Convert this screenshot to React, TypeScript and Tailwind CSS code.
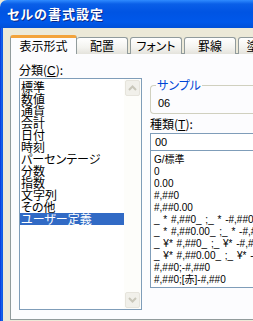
const font = { fontFamily: '"Noto Sans CJK JP", "Noto Sans", sans-serif' };
const latin = { fontFamily: '"Liberation Sans", "Noto Sans CJK JP", sans-serif' };

const categories = [
  "標準",
  "数値",
  "通貨",
  "会計",
  "日付",
  "時刻",
  "パーセンテージ",
  "分数",
  "指数",
  "文字列",
  "その他",
  "ユーザー定義",
];

const formats = [
  "G/標準",
  "0",
  "0.00",
  "#,##0",
  "#,##0.00",
  "_ * #,##0_ ;_ * -#,##0_ ;_ * \"-\"_ ;_ @_ ",
  "_ * #,##0.00_ ;_ * -#,##0.00_ ;_ * \"-\"??_ ;_ @_ ",
  "_ ¥* #,##0_ ;_ ¥* -#,##0_ ;_ ¥* \"-\"_ ;_ @_ ",
  "_ ¥* #,##0.00_ ;_ ¥* -#,##0.00_ ;_ ¥* \"-\"??_ ;_ @_ ",
  "#,##0;-#,##0",
  "#,##0;[赤]-#,##0",
];

const tabs = [
  { label: "配置", w: "w-[51px] border-l-0" },
  { label: "フォント", w: "w-[52px]" },
  { label: "罫線", w: "w-[52px]" },
  { label: "塗りつぶし", w: "w-[72px]" },
];

function ScrollButton({ down }: { down?: boolean }) {
  return (
    <div className="w-[15px] h-[16px] rounded-[2px] bg-[#f1f0ea] border border-[#e6e4dc] flex items-center justify-center">
      <svg width="9" height="6" viewBox="0 0 9 6">
        <path
          d={down ? "M1 1 L4.5 4.5 L8 1" : "M1 5 L4.5 1.5 L8 5"}
          fill="none"
          stroke="#c9c7ba"
          strokeWidth="2"
        />
      </svg>
    </div>
  );
}

export default function App() {
  return (
    <div
      className="w-[253px] h-[321px] overflow-hidden flex flex-col bg-[#ece9d8] text-[12px] text-black [font-feature-settings:'palt']"
      style={font}
    >
      {/* title bar */}
      <div className="h-[28px] shrink-0 rounded-tl-[7px] bg-[linear-gradient(#2f8bff_0px,#0a5fe8_4px,#0054e3_12px,#0058ea_22px,#0050d8_28px)] flex items-center pl-[7px]">
        <span className="text-white font-bold text-[13px] tracking-[1px] [text-shadow:1px_1px_0_#0a2a8a]">
          セルの書式設定
        </span>
      </div>

      <div className="flex flex-1 min-h-0">
        <div className="w-[3px] shrink-0 bg-[linear-gradient(90deg,#0831d9,#166aee_60%,#0d4fdf)]" />

        <div className="flex-1 min-w-0 overflow-hidden pl-[7px] pt-[7px] flex flex-col">
          {/* tabs */}
          <div className="flex items-end h-[19px] relative z-10 -mb-px">
            <div className="w-[67px] h-[19px] shrink-0 bg-[#fcfcfe] border border-[#919b9c] border-b-0 border-t-[3px] border-t-[#f3a33b] rounded-t-[3px] flex items-center justify-center whitespace-nowrap">
              表示形式
            </div>
            <div className="flex gap-[2px] items-end">
              {tabs.map((t) => (
                <div
                  key={t.label}
                  className={`${t.w} h-[17px] shrink-0 bg-[linear-gradient(#ffffff,#f3f3ef_60%,#e4e3dc)] border border-[#919b9c] border-b-0 rounded-t-[3px] flex items-center justify-center whitespace-nowrap`}
                >
                  {t.label}
                </div>
              ))}
            </div>
          </div>

          {/* panel */}
          <div className="flex-1 min-h-0 bg-[#fcfcfe] border border-[#919b9c] border-r-0 flex pl-[8px] pt-[9px] gap-[8px] mb-[1px]">
            <div className="w-[123px] shrink-0 flex flex-col">
              <div className="h-[14px] leading-[14px]">
                分類(<span className="underline" style={latin}>C</span>):
              </div>
              <div className="mt-[1px] h-[232px] border border-[#7f9db9] bg-white flex">
                <div className="flex-1 min-w-0 pt-[2px]">
                  {categories.map((c) => (
                    <div
                      key={c}
                      className={
                        c === "ユーザー定義"
                          ? "h-[12px] leading-[12px] pl-[1px] bg-[#316ac5] text-white whitespace-nowrap"
                          : "h-[12px] leading-[12px] pl-[1px] whitespace-nowrap"
                      }
                    >
                      {c}
                    </div>
                  ))}
                </div>
                <div className="w-[17px] shrink-0 bg-[#fdfdfa] flex flex-col justify-between items-center py-[1px]">
                  <ScrollButton />
                  <ScrollButton down />
                </div>
              </div>
            </div>

            <div className="flex-1 min-w-0 flex flex-col">
              {/* sample group */}
              <div
                className="relative mt-[22px] h-[29px] shrink-0 border border-[#d0d0bf] border-r-0 rounded-l-[4px] pl-[7px] pt-[11px] leading-[12px] text-[11px]"
                style={latin}
              >
                <span
                  className="absolute -top-[8px] left-[5px] px-[1px] bg-[#fcfcfe] text-[#0046d5] leading-[14px] text-[12px]"
                  style={font}
                >
                  サンプル
                </span>
                06
              </div>

              <div className="mt-[3px] h-[14px] leading-[14px]">
                種類(<span className="underline" style={latin}>T</span>):
              </div>
              <div
                className="mt-[2px] h-[18px] shrink-0 border border-[#7f9db9] border-r-0 bg-white pl-[4px] leading-[16px] text-[11px]"
                style={latin}
              >
                00
              </div>
              <div
                className="h-[137px] shrink-0 border border-[#7f9db9] border-t-0 border-r-0 bg-white pt-[3px] pl-[3px] overflow-hidden text-[10px] [word-spacing:1px]"
                style={latin}
              >
                {formats.map((f) => (
                  <div key={f} className="h-[12px] leading-[12px] whitespace-pre">
                    {f}
                  </div>
                ))}
              </div>
            </div>
          </div>
        </div>
      </div>
    </div>
  );
}
